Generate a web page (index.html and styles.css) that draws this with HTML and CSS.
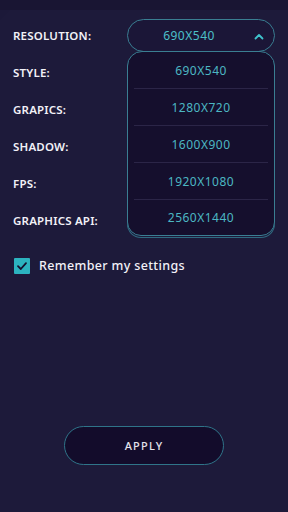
FILE: index.html
```html
<!DOCTYPE html>
<html>
<head>
<meta charset="utf-8">
<link rel="stylesheet" href="styles.css">
</head>
<body>
<div class="topbar"></div>
<div class="panel">
  <div class="rows">
    <div class="row">
      <span class="label">RESOLUTION:</span>
      <div class="select-wrap">
        <div class="select">
          <span class="select-value">690X540</span>
          <svg class="chev" width="10" height="7" viewBox="0 0 10 7"><path d="M1.5 5.5 L5 2 L8.5 5.5" fill="none" stroke="#3fc3cc" stroke-width="1.8" stroke-linecap="round" stroke-linejoin="round"/></svg>
        </div>
        <ul class="menu">
          <li>690X540</li>
          <li>1280X720</li>
          <li>1600X900</li>
          <li>1920X1080</li>
          <li>2560X1440</li>
        </ul>
      </div>
    </div>
    <div class="row"><span class="label">STYLE:</span></div>
    <div class="row"><span class="label">GRAPICS:</span></div>
    <div class="row"><span class="label">SHADOW:</span></div>
    <div class="row"><span class="label">FPS:</span></div>
    <div class="row"><span class="label">GRAPHICS API:</span></div>
  </div>
  <label class="remember">
    <span class="checkbox"><svg width="12" height="10" viewBox="0 0 12 10"><path d="M2 5.2 L4.8 8 L10 2.2" fill="none" stroke="#15102e" stroke-width="1.8" stroke-linecap="round" stroke-linejoin="round"/></svg></span>
    <span class="remember-text">Remember my settings</span>
  </label>
  <div class="actions">
    <button class="apply">APPLY</button>
  </div>
</div>
</body>
</html>
```
FILE: styles.css
```css
* { box-sizing: border-box; }
html, body { margin: 0; padding: 0; }
body {
  width: 288px;
  height: 512px;
  background: #1c1939;
  font-family: "Noto Sans", "DejaVu Sans", sans-serif;
  overflow: hidden;
}
.topbar {
  height: 10px;
  background: #191533;
}
.panel {
  background: #1d1a3a;
  clip-path: polygon(10px 0, 100% 0, 100% 100%, 0 100%, 0 10px);
  height: 502px;
  padding: 7px 13px 0 13px;
}
.rows {
  display: flex;
  flex-direction: column;
}
.row {
  height: 37px;
  display: flex;
  align-items: center;
  justify-content: space-between;
  position: relative;
}
.label {
  color: #f2f1f7;
  font-size: 11.5px;
  font-weight: 600;
  letter-spacing: 0.2px;
}
.select-wrap {
  position: relative;
  width: 148px;
}
.select {
  height: 33px;
  border: 1px solid #3a7e92;
  border-radius: 17px;
  background: #1b1637;
  display: flex;
  align-items: center;
  justify-content: center;
  padding-right: 24px;
  position: relative;
}
.select-value {
  color: #4cc0c9;
  font-size: 12px;
  letter-spacing: 0.5px;
}
.chev {
  position: absolute;
  right: 10px;
  top: 13px;
}
.menu {
  position: absolute;
  left: 0;
  top: 32px;
  width: 148px;
  margin: 0;
  padding: 0 6px;
  list-style: none;
  background: #150f2d;
  border: 1px solid #3a7e92;
  border-radius: 15px 15px 14px 14px;
  box-shadow: 0 2px 0 -1px #1c1939, 0 2px 0 0 #2f6a80;
  z-index: 2;
}
.menu li {
  height: 37px;
  display: flex;
  align-items: center;
  justify-content: center;
  color: #4cb7c3;
  font-size: 12px;
  letter-spacing: 0.5px;
  border-bottom: 1px solid #2b2547;
}
.menu li:last-child { border-bottom: none; height: 35px; }
.remember {
  display: flex;
  align-items: center;
  gap: 9px;
  margin-top: 18px;
  margin-left: 1px;
}
.checkbox {
  width: 16px;
  height: 16px;
  background: #2cb3bf;
  border-radius: 1px;
  display: flex;
  align-items: center;
  justify-content: center;
}
.remember-text {
  color: #f2f1f7;
  font-size: 12.5px;
  font-weight: 500;
  letter-spacing: 0.35px;
}
.actions {
  display: flex;
  justify-content: center;
  margin-top: 152px;
}
.apply {
  width: 160px;
  height: 39px;
  border: 1px solid #2f7489;
  border-radius: 20px;
  background: #130c2b;
  color: #e4e3ec;
  font-family: "Noto Sans", "DejaVu Sans", sans-serif;
  font-size: 11px;
  font-weight: 500;
  letter-spacing: 1.2px;
  padding: 0;
}
```
